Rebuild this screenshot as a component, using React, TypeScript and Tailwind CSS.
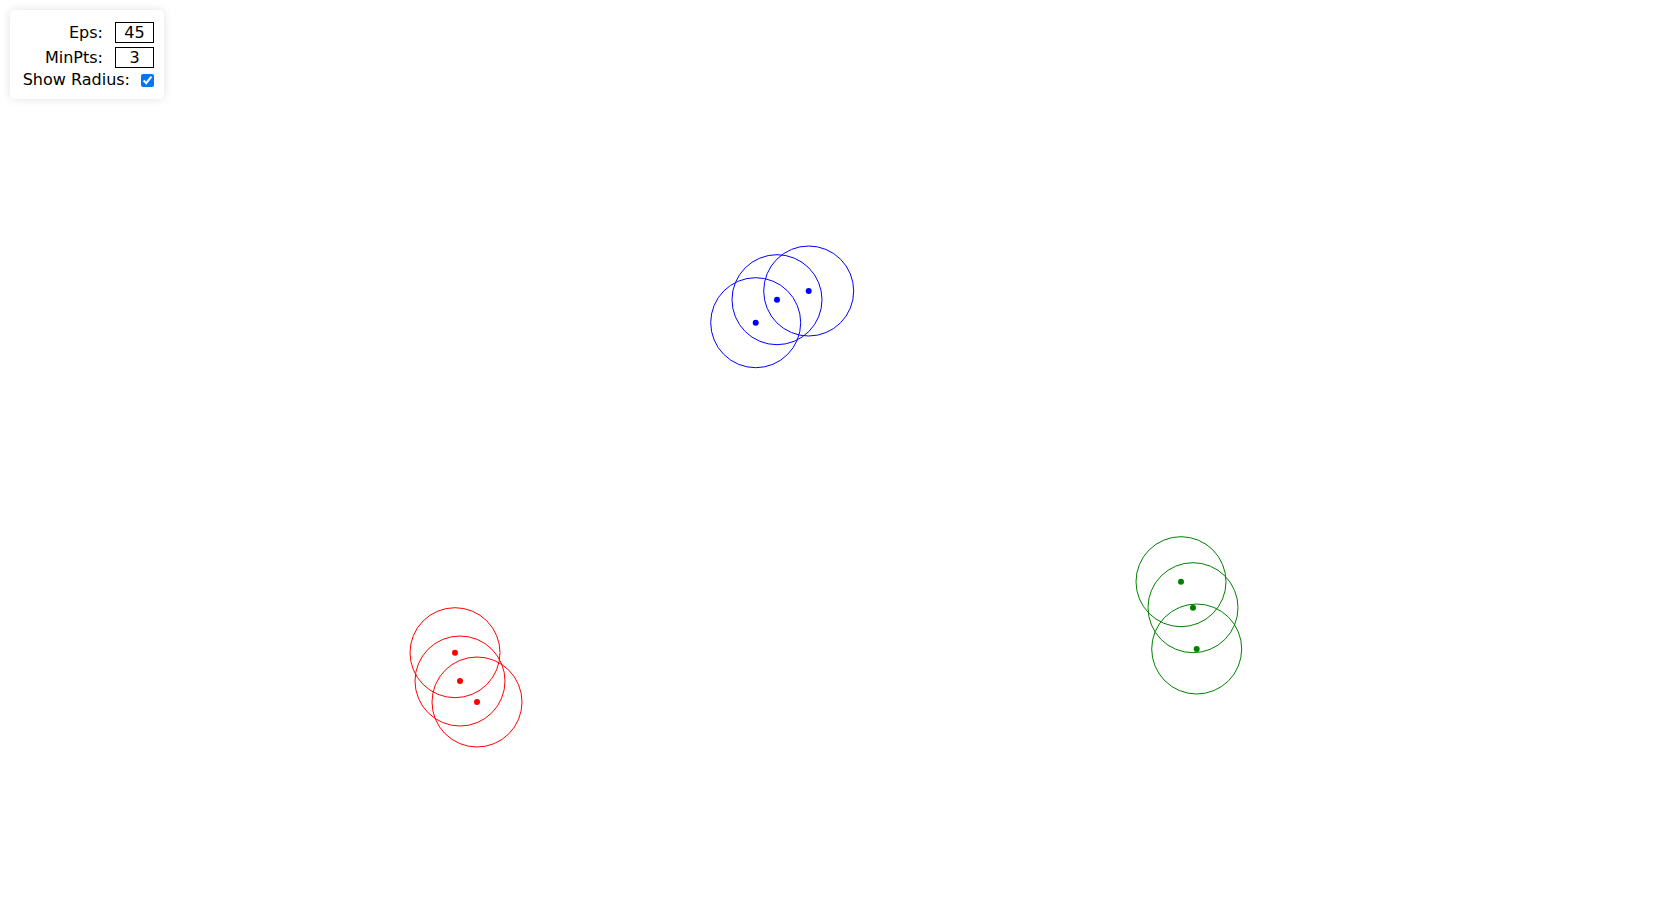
import React, { useState } from "react";

type Pt = { x: number; y: number; c: string };

const points: Pt[] = [
  { x: 755.7, y: 322.7, c: "blue" },
  { x: 777, y: 299.7, c: "blue" },
  { x: 808.7, y: 291, c: "blue" },
  { x: 455, y: 652.7, c: "red" },
  { x: 460, y: 681, c: "red" },
  { x: 477, y: 702, c: "red" },
  { x: 1181, y: 581.7, c: "green" },
  { x: 1193, y: 607.7, c: "green" },
  { x: 1196.7, y: 649, c: "green" },
];

export default function App() {
  const [eps, setEps] = useState("45");
  const [minPts, setMinPts] = useState("3");
  const [show, setShow] = useState(true);
  const r = Number(eps) || 0;

  return (
    <div
      className="relative w-full h-screen bg-white overflow-hidden"
      style={{ fontFamily: "'DejaVu Sans', Verdana, sans-serif" }}
    >
      <svg className="block" width="1663" height="897">
        {show &&
          points.map((p, i) => (
            <circle key={"r" + i} cx={p.x} cy={p.y} r={r} fill="none" stroke={p.c} strokeWidth={1} />
          ))}
        {points.map((p, i) => (
          <circle key={"d" + i} cx={p.x} cy={p.y} r={3} fill={p.c} />
        ))}
      </svg>

      <div className="absolute top-[10px] left-[10px] w-[154px] bg-white rounded-[5px] shadow-[0_0_10px_rgba(0,0,0,0.12)] pl-[10px] pr-[10px] pt-[12px] pb-[9px] text-[16px] text-black leading-[20px]">
        <div className="flex items-center justify-end gap-[12px] h-[21px]">
          <span>Eps:</span>
          <input
            value={eps}
            onChange={(e) => setEps(e.target.value)}
            className="w-[39px] h-[21px] border border-black text-center text-[16px] leading-[19px] outline-none p-0"
            style={{ fontFamily: "'DejaVu Sans', Verdana, sans-serif" }}
          />
        </div>
        <div className="flex items-center justify-end gap-[12px] h-[21px] mt-[4px]">
          <span>MinPts:</span>
          <input
            value={minPts}
            onChange={(e) => setMinPts(e.target.value)}
            className="w-[39px] h-[21px] border border-black text-center text-[16px] leading-[19px] outline-none p-0"
            style={{ fontFamily: "'DejaVu Sans', Verdana, sans-serif" }}
          />
        </div>
        <div className="flex items-center justify-end gap-[11px] h-[20px] mt-[2px]">
          <span>Show Radius:</span>
          <input
            type="checkbox"
            checked={show}
            onChange={(e) => setShow(e.target.checked)}
            className="w-[13px] h-[13px] m-0"
          />
        </div>
      </div>
    </div>
  );
}
